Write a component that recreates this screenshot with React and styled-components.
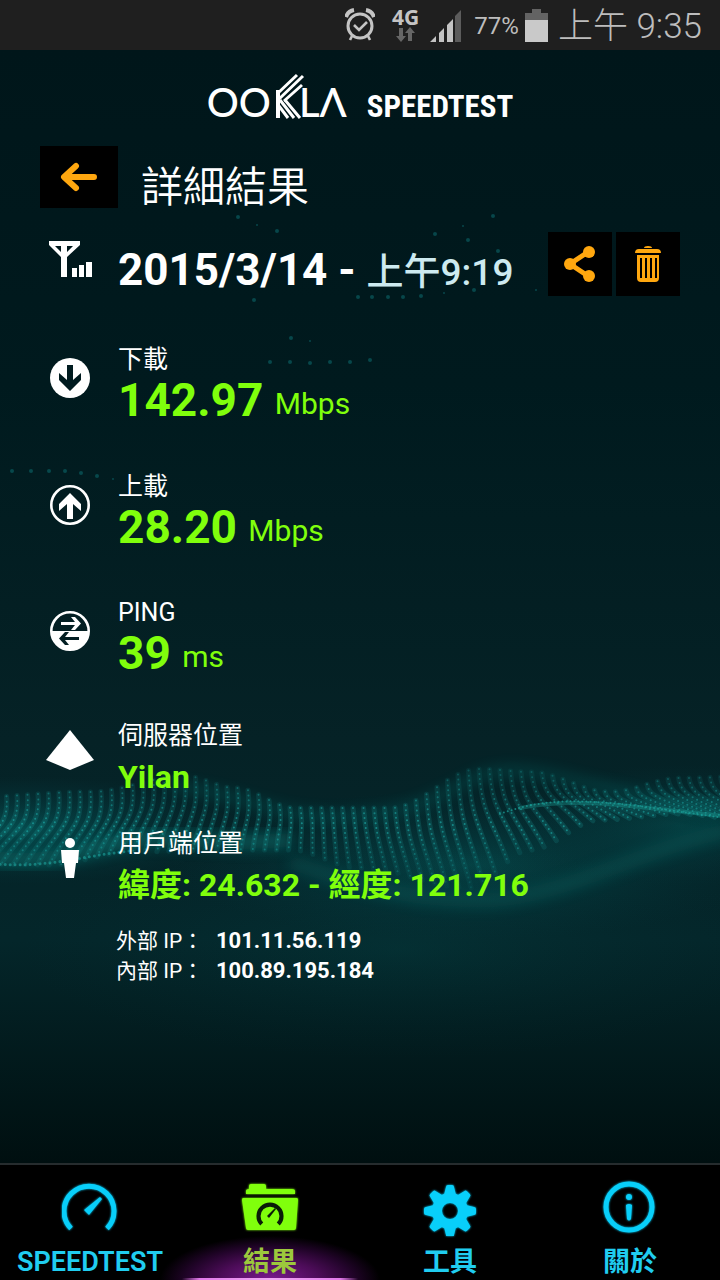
import React from 'react';
import styled, { createGlobalStyle } from 'styled-components';

const GlobalStyle = createGlobalStyle`
  * {
    box-sizing: border-box;
  }

  body {
    margin: 0;
    background: #000;
    color: #fff;
    font-family: Roboto, 'Noto Sans CJK TC', sans-serif;
  }
`;

// Layout
const Screen = styled.div`
  display: flex;
  flex-direction: column;
  min-height: 100vh;
`;

const StatusBar = styled.div`
  display: flex;
  align-items: center;
  justify-content: flex-end;
  height: 50px;
  padding-right: 18px;
  background: #1f1f1f;
  color: #bdbdbd;
  font-weight: 300;
`;

const Network = styled.div`
  display: flex;
  flex-direction: column;
  align-items: center;
  margin: 0 11px 0 17px;
  color: #c4c4c4;
  font: 700 21px/19px 'Noto Sans', sans-serif;
`;

const Percent = styled.span`
  margin: 2px 6px 0 12px;
  font-size: 24px;
  font-weight: 400;
`;

const Clock = styled.span`
  margin-left: 10px;
  padding-bottom: 6px;
  font-size: 35px;
`;

const Main = styled.main`
  position: relative;
  flex: 1;
  padding: 22px 40px 40px;
  background: linear-gradient(#00161a 0%, #001a1e 30%, #052226 62%, #04262a 80%, #000f10 100%);
`;

const Backdrop = styled.svg`
  position: absolute;
  inset: 0;
  width: 100%;
  height: 100%;
`;

const Content = styled.div`
  position: relative;
`;

// Header
const Logo = styled.div`
  display: flex;
  align-items: baseline;
  justify-content: center;
  height: 50px;
  padding-top: 2px;
`;

const Ookla = styled.span`
  display: flex;
  align-items: flex-end;
  font-family: Lato, 'Noto Sans', sans-serif;
  font-size: 40px;
  font-weight: 500;
  line-height: 40px;

  svg {
    margin: 0 0 4px 5px;
    overflow: visible;
  }
`;

const Product = styled.span`
  margin-left: 20px;
  font-family: 'Roboto Condensed', 'Liberation Sans Narrow', sans-serif;
  font-size: 31px;
  font-weight: 700;
  line-height: 36px;
`;

const TitleRow = styled.div`
  display: flex;
  align-items: flex-start;
  gap: 23px;
  margin-top: 24px;
`;

const SquareButton = styled.button`
  display: flex;
  align-items: center;
  justify-content: center;
  width: ${(props) => props.$width}px;
  height: ${(props) => props.$height}px;
  padding: 0;
  border: 0;
  background: #000;
  color: #ffa70f;
`;

const Title = styled.h1`
  height: 62px;
  margin: 0;
  padding-top: 12px;
  font-size: 42px;
  font-weight: 350;
  line-height: 60px;
`;

const DateRow = styled.div`
  display: flex;
  align-items: flex-start;
  height: 64px;
  margin-top: 24px;
`;

const DateText = styled.h2`
  flex: 1;
  margin: 8px 0 0;
  font-size: 44px;
  font-weight: 700;
  line-height: 60px;
  white-space: nowrap;

  span {
    color: #cdeaf0;
    font-size: 37px;
    font-weight: 500;
  }
`;

const Actions = styled.div`
  display: flex;
  gap: 4px;
`;

// Results
const IconCell = styled.div`
  display: flex;
  justify-content: center;
  flex: none;
  width: 60px;
  margin-right: 18px;
  padding-top: ${(props) => props.$top}px;
`;

const Results = styled.dl`
  margin: 0;
`;

const Result = styled.div`
  display: flex;
  margin-top: ${(props) => props.$gap}px;
`;

const Label = styled.dt`
  font-size: 25px;
  font-weight: 400;
  line-height: 26px;
`;

const Value = styled.dd`
  height: 54px;
  margin: 0;
  color: #80ff0c;
  font-size: 46px;
  font-weight: 700;
  line-height: 54px;
  white-space: nowrap;

  small {
    font-size: 30px;
    font-weight: 400;
    line-height: 30px;
    vertical-align: 2px;
  }
`;

const Place = styled.dd`
  margin: 8px 0 0;
  color: #80ff0c;
  font-size: 32px;
  font-weight: 700;
  line-height: 40px;
`;

const Addresses = styled.dl`
  display: grid;
  grid-template-columns: 100px 1fr;
  margin: 21px 0 0 76px;
  font-size: 22px;
  line-height: 30px;

  dt {
    font-size: 21px;
    font-weight: 400;
    white-space: nowrap;
  }

  dd {
    margin: 0;
    font-weight: 700;
  }
`;

// Bottom tabs
const Tabs = styled.nav`
  display: grid;
  grid-template-columns: repeat(4, 1fr);
  border-top: 2px solid #262c2e;
  background: #000;
  isolation: isolate;
`;

const Tab = styled.a`
  position: relative;
  display: flex;
  flex-direction: column;
  align-items: center;
  gap: 8px;
  padding-top: 15px;
  color: ${(props) => (props.$active ? '#9cc83c' : '#20cdf0')};
  font-size: 27px;
  font-weight: 600;
  line-height: 36px;
  text-decoration: none;

  svg {
    color: ${(props) => (props.$active ? '#80ff0c' : '#08cffa')};
    filter: drop-shadow(0 0 1px currentColor);
  }
`;

// Purple light under the open tab, spilling over its neighbours
const TabGlow = styled.span`
  position: absolute;
  right: -20px;
  bottom: 0;
  left: -20px;
  z-index: -1;
  height: 46px;
  background:
    linear-gradient(90deg, transparent 10%, #e07ae8 18%, #f0a8f4 50%, #e07ae8 82%, transparent 90%) bottom / 100% 2px no-repeat,
    radial-gradient(ellipse 110px 44px at 50% 100%, #7c1a90, #4c0c58 45%, #22042a 75%, transparent);
`;

// Smooth curve through a list of [x, y] points
const curve = (points, x) => {
  const last = points.length - 1;
  if (x <= points[0][0]) return points[0][1];
  if (x >= points[last][0]) return points[last][1];
  const i = points.findIndex((p) => p[0] > x) - 1;
  const [x0, y0] = points[i];
  const [x1, y1] = points[i + 1];
  const t = (1 - Math.cos((Math.PI * (x - x0)) / (x1 - x0))) / 2;
  return y0 + (y1 - y0) * t;
};

const crest = [[-40, 748], [90, 742], [185, 726], [235, 738], [295, 758], [390, 758], [480, 719], [530, 722], [610, 742], [680, 728], [760, 726]];
const trough = [[-40, 813], [50, 815], [130, 802], [220, 800], [290, 800], [360, 818], [470, 838], [530, 800], [600, 770], [680, 764], [760, 772]];

const strands = Array.from({ length: 74 }, (_, i) => {
  const x = -25 + i * 10.5;
  const lean = x < 300 ? (300 - x) * -0.14 : (x - 300) * 0.16;
  const top = curve(crest, x);
  const bottom = curve(trough, x + lean);
  const mid = (top + bottom) / 2;
  return `M${x} ${top}C${x + 3} ${mid} ${x + lean * 0.4} ${mid} ${x + lean} ${bottom}`;
});

const sparks = [
  [238, 167, 2], [277, 181, 2], [257, 175, 1], [312, 214, 1], [322, 233, 1], [254, 250, 2], [291, 288, 2],
  [310, 291, 1], [358, 247, 2], [372, 247, 2], [388, 247, 2], [403, 247, 2], [421, 246, 2], [435, 184, 2],
  [463, 176, 1], [498, 201, 2], [474, 240, 2], [444, 243, 1], [468, 190, 2], [493, 166, 2], [536, 240, 1],
  [270, 312, 2], [290, 312, 2], [310, 313, 2], [330, 312, 2], [350, 312, 2], [370, 310, 2],
  [12, 421, 2], [31, 421, 2], [49, 421, 2], [65, 421, 2], [81, 423, 2], [97, 426, 2], [113, 429, 1],
];

const WaveBackdrop = () => (
  <Backdrop viewBox="0 0 720 1113" preserveAspectRatio="xMidYMid slice" aria-hidden="true">
    <defs>
      <linearGradient id="strand" gradientUnits="userSpaceOnUse" x1="0" y1="715" x2="0" y2="850">
        <stop offset="0" stopColor="#149090" stopOpacity="0.3" />
        <stop offset="0.45" stopColor="#1ba7a4" stopOpacity="0.7" />
        <stop offset="1" stopColor="#0d8080" stopOpacity="0.15" />
      </linearGradient>
      <radialGradient id="glow">
        <stop offset="0" stopColor="#067070" stopOpacity="0.55" />
        <stop offset="1" stopColor="#044048" stopOpacity="0" />
      </radialGradient>
      <filter id="soft" x="-10%" y="-50%" width="120%" height="200%">
        <feGaussianBlur stdDeviation="7" />
      </filter>
    </defs>
    <ellipse cx="20" cy="780" rx="210" ry="54" fill="url(#glow)" />
    <ellipse cx="470" cy="815" rx="300" ry="75" fill="url(#glow)" opacity="0.7" />
    <ellipse cx="680" cy="775" rx="180" ry="60" fill="url(#glow)" opacity="0.6" />
    <ellipse cx="400" cy="900" rx="380" ry="110" fill="url(#glow)" opacity="0.25" />
    <path d="M290 812C370 840 420 852 490 850S640 800 730 780" stroke="#0b7470" strokeWidth="14" fill="none" opacity="0.3" filter="url(#soft)" />
    <path d="M-10 808C60 816 90 796 130 790S220 796 290 790" stroke="#0a8580" strokeWidth="14" fill="none" opacity="0.5" filter="url(#soft)" />
    <path d="M170 736C240 742 270 766 330 766S420 758 470 730S600 744 720 762" stroke="#0a8580" strokeWidth="8" fill="none" opacity="0.3" filter="url(#soft)" />
    <g fill="none" stroke="url(#strand)" strokeLinecap="round">
      {strands.map((d) => (
        <g key={d}>
          <path d={d} strokeWidth="5" opacity="0.3" />
          <path d={d} strokeWidth="2" strokeDasharray="0 5" />
        </g>
      ))}
    </g>
    <g fill="none" stroke="#1da49c" strokeLinecap="round">
      <path d="M500 764C560 742 610 752 725 768" strokeWidth="2" opacity="0.7" strokeDasharray="0 4" />
      <path d="M520 758C580 746 640 758 725 766" strokeWidth="4" opacity="0.35" />
      <path d="M-5 814C50 818 80 806 130 801" strokeWidth="3" opacity="0.6" strokeDasharray="0 5" />
    </g>
    {sparks.map(([x, y, r]) => (
      <circle key={`${x}-${y}`} cx={x} cy={y} r={r} fill="#0e7478" opacity="0.5" />
    ))}
  </Backdrop>
);

const AlarmIcon = () => (
  <svg width="30" height="34" viewBox="0 0 30 34" fill="none" stroke="#c4c4c4" strokeWidth="3">
    <circle cx="15" cy="18" r="12" />
    <path d="M9 17l5 5 8-8M7 28l-2 4M23 28l2 4" strokeWidth="2.6" />
    <path d="M1 9q2-6 8-7M29 9q-2-6-8-7" strokeWidth="4" />
  </svg>
);

const SignalIcon = () => (
  <svg width="32" height="33" viewBox="0 0 32 33" fill="#c4c4c4">
    <path d="M0 33l6-6v6zM9 24l5-5v14H9zM17 16l6-6v23h-6z" />
    <path d="M25 7l6-6v32h-6z" fill="#5c5c5c" />
  </svg>
);

const BatteryIcon = () => (
  <svg width="23" height="33" viewBox="0 0 23 33">
    <path d="M7 0h9v4h7v7H0V4h7z" fill="#636363" />
    <path d="M0 11h23v22H0z" fill="#c9c9c9" />
  </svg>
);

// Striped mark that stands between the letters of the logo
const OoklaMark = () => (
  <svg width="23" height="44" viewBox="0 0 23 44" fill="none" stroke="#fff">
    <path d="M2 16v28" strokeWidth="4" />
    <path d="M1 20L21 1M2 26L27 2M8 27L26 11" strokeWidth="3" />
    <path d="M4 26l14 18M9 26l15 18M3 32l9 12" strokeWidth="3" />
  </svg>
);

const Tower = () => (
  <svg width="44" height="36" viewBox="-1 0 44 36">
    <path d="M0 0h31v4L18 16v20h-6V16L0 4zM6 5l6 6V5zM18 5v6l6-6zM23 27h5v9h-5zM30 24h5v12h-5zM37 21h6v15h-6z" fill="#fff" fillRule="evenodd" />
  </svg>
);

const gauge = 'M-18 17.500A25 25 0 1 1 18 17.500';

const SpeedIcon = () => (
  <svg width="56" height="56" viewBox="0 0 56 56">
    <path d={gauge} transform="translate(27 31)" fill="none" stroke="currentColor" strokeWidth="5" />
    <path d="M22 30L38 17l2 2-13 16z" fill="currentColor" />
  </svg>
);

const FolderIcon = () => (
  <svg width="56" height="56" viewBox="0 0 56 56">
    <path d="M4 14v-3q0-2 3-2V6q0-2 2-2h13q2 0 2 2v3h26q3 0 3 2v3zM1 18h54q1 0 1 2l-2 28q0 2-2 2H6q-2 0-2-2L0 20q0-2 1-2z" fill="currentColor" />
    <path d={gauge} transform="translate(28 36) scale(.46)" fill="none" stroke="#0a1c08" strokeWidth="9" />
    <path d="M25 36l8-8 1 1-7 9z" fill="#0a1c08" />
  </svg>
);

const GearIcon = () => (
  <svg width="56" height="56" viewBox="0 0 56 56">
    <g transform="translate(28 31)">
      <circle r="13" fill="none" stroke="currentColor" strokeWidth="10" />
      {[0, 45, 90, 135, 180, 225, 270, 315].map((angle) => (
        <path key={angle} d="M-6-16l2-8q0-2 2-2h4q2 0 2 2l2 8z" transform={`rotate(${angle})`} fill="currentColor" />
      ))}
    </g>
  </svg>
);

const InfoIcon = () => (
  <svg width="56" height="56" viewBox="0 0 56 56">
    <circle cx="27" cy="27" r="23" fill="none" stroke="currentColor" strokeWidth="5" />
    <circle cx="27" cy="17" r="3" fill="currentColor" />
    <path d="M24 25q3-2 6 0l-1 14q-2 3-4 0z" fill="currentColor" />
  </svg>
);

const DownIcon = () => (
  <svg width="40" height="40" viewBox="0 0 40 40">
    <circle cx="20" cy="20" r="20" fill="#fff" />
    <path d="M17 7h6v15l8-7v7L20 33 9 22v-7l8 7z" fill="#001b1f" />
  </svg>
);

const UpIcon = () => (
  <svg width="40" height="40" viewBox="0 0 40 40">
    <circle cx="20" cy="20" r="18.700" fill="none" stroke="#fff" strokeWidth="2.600" />
    <path d="M17 34h6V19l8 7v-7L20 8 9 19v7l8-7z" fill="#fff" />
  </svg>
);

const PingIcon = () => (
  <svg width="40" height="40" viewBox="0 0 40 40">
    <circle cx="20" cy="20" r="18.700" fill="none" stroke="#fff" strokeWidth="2.600" />
    <path d="M1 20h38a19 19 0 0 1-38 0z" fill="#fff" />
    <path d="M11 11h14l-4-5h4l6 6.500-6 6.500h-4l4-5H11z" fill="#fff" />
    <path d="M29 26H15l4-5h-4l-6 6.500 6 6.500h4l-4-5h14z" fill="#031f23" />
  </svg>
);

const ServerIcon = () => (
  <svg width="48" height="40" viewBox="0 0 48 40">
    <path d="M24 0l24 30-24 10L0 30z" fill="#fff" />
  </svg>
);

const PersonIcon = () => (
  <svg width="18" height="40" viewBox="0 0 18 40" fill="#fff">
    <circle cx="9" cy="5" r="5" />
    <path d="M0 12h18l-1 13h-2l-2 15H5L3 25H1z" />
  </svg>
);

const BackIcon = () => (
  <svg width="38" height="30" viewBox="0 0 38 30" fill="none" stroke="currentColor" strokeWidth="6" strokeLinecap="round" strokeLinejoin="round">
    <path d="M34 15H5M16 4L4 15l12 11" />
  </svg>
);

const ShareIcon = () => (
  <svg width="32" height="36" viewBox="0 0 32 36" fill="currentColor">
    <path d="M24 6L6 18l18 12" fill="none" stroke="currentColor" strokeWidth="5" />
    <circle cx="25" cy="6" r="6" />
    <circle cx="6" cy="18" r="6" />
    <circle cx="25" cy="30" r="6" />
  </svg>
);

const TrashIcon = () => (
  <svg width="26" height="36" viewBox="0 0 26 36" fill="currentColor">
    <path d="M9 2q0-2 4-2t4 2zM4 3h18q4 0 4 4H0q0-4 4-4z" />
    <path d="M2 9h22v23q0 4-4 4H6q-4 0-4-4zM5 12v20h2V12zM10 12v20h2V12zM15 12v20h2V12zM20 12v20h2V12z" fillRule="evenodd" />
  </svg>
);

const speeds = [
  { label: '下載', value: '142.97', unit: 'Mbps', gap: 51, icon: <DownIcon /> },
  { label: '上載', value: '28.20', unit: 'Mbps', gap: 47, icon: <UpIcon /> },
  { label: 'PING', value: '39', unit: 'ms', gap: 46, icon: <PingIcon /> },
];

const places = [
  { label: '伺服器位置', value: 'Yilan', gap: 43, icon: <ServerIcon /> },
  { label: '用戶端位置', value: '緯度: 24.632 - 經度: 121.716', gap: 34, icon: <PersonIcon /> },
];

const tabs = [
  { label: 'SPEEDTEST', href: '#speedtest', icon: <SpeedIcon /> },
  { label: '結果', href: '#results', icon: <FolderIcon />, active: true },
  { label: '工具', href: '#tools', icon: <GearIcon /> },
  { label: '關於', href: '#about', icon: <InfoIcon /> },
];

const App = () => {
  return (
    <Screen>
      <GlobalStyle />
      <StatusBar>
        <AlarmIcon />
        <Network>
          4G
          <svg width="20" height="15" viewBox="0 0 20 15" fill="#666">
            <path d="M3 1h4v8h3l-5 6-5-6h3zM12 14h4V6h3l-5-6-5 6h3z" />
          </svg>
        </Network>
        <SignalIcon />
        <Percent>77%</Percent>
        <BatteryIcon />
        <Clock>上午 9:35</Clock>
      </StatusBar>

      <Main>
        <WaveBackdrop />
        <Content>
          <Logo>
            <Ookla>
              OO
              <OoklaMark />
              LΛ
            </Ookla>
            <Product>SPEEDTEST</Product>
          </Logo>

          <TitleRow>
            <SquareButton $width={78} $height={62} aria-label="返回">
              <BackIcon />
            </SquareButton>
            <Title>詳細結果</Title>
          </TitleRow>

          <DateRow>
            <IconCell $top={9}>
              <Tower />
            </IconCell>
            <DateText>
              2015/3/14 - <span>上午9:19</span>
            </DateText>
            <Actions>
              <SquareButton $width={64} $height={64} aria-label="分享">
                <ShareIcon />
              </SquareButton>
              <SquareButton $width={64} $height={64} aria-label="刪除">
                <TrashIcon />
              </SquareButton>
            </Actions>
          </DateRow>

          <Results>
            {speeds.map((item) => (
              <Result key={item.label} $gap={item.gap}>
                <IconCell $top={11}>{item.icon}</IconCell>
                <div>
                  <Label>{item.label}</Label>
                  <Value>
                    {item.value} <small>{item.unit}</small>
                  </Value>
                </div>
              </Result>
            ))}
            {places.map((item) => (
              <Result key={item.label} $gap={item.gap}>
                <IconCell $top={7}>{item.icon}</IconCell>
                <div>
                  <Label>{item.label}</Label>
                  <Place>{item.value}</Place>
                </div>
              </Result>
            ))}
          </Results>

          <Addresses>
            <dt>外部 IP：</dt>
            <dd>101.11.56.119</dd>
            <dt>內部 IP：</dt>
            <dd>100.89.195.184</dd>
          </Addresses>
        </Content>
      </Main>

      <Tabs>
        {tabs.map((tab) => (
          <Tab key={tab.label} href={tab.href} $active={tab.active}>
            {tab.active && <TabGlow />}
            {tab.icon}
            {tab.label}
          </Tab>
        ))}
      </Tabs>
    </Screen>
  );
};

export default App;
